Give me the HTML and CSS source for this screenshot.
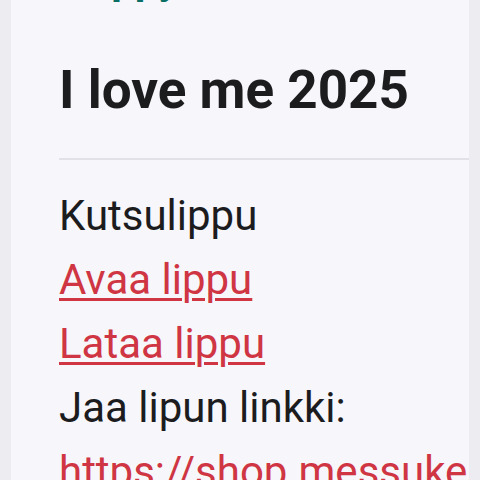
FILE: index.html
```html
<!DOCTYPE html>
<html lang="fi">
<head>
  <meta charset="UTF-8" />
  <title>Kutsulippu</title>
  <meta name="viewport" content="width=device-width, initial-scale=1" />
  <link rel="stylesheet" href="styles.css">
</head>
<body>
  <div class="card">
    <h2 class="brand">Happy</h2>
    <h1 class="event">I love me 2025</h1>
    <div class="ticket">
      <p>Kutsulippu</p>
      <p><a href="#">Avaa lippu</a></p>
      <p><a href="#">Lataa lippu</a></p>
      <p>Jaa lipun linkki:</p>
      <p><a class="share" href="#">https://shop.messukeskus.com/fi/tickets/share</a></p>
    </div>
  </div>
</body>
</html>
```

FILE: styles.css
```css
body {
  margin: 0;
  padding: 0 11px;
  background: #ececf1;
  font-family: Roboto, "Liberation Sans", sans-serif;
  color: #1c1c1e;
  height: 480px;
  overflow: hidden;
}
.card {
  background: #f6f6fb;
  margin-top: -46px;
  padding-left: 48px;
  overflow: hidden;
  min-height: 600px;
}
.brand {
  margin: 0;
  font-size: 42px;
  font-weight: 700;
  line-height: 50px;
  color: #0b6e65;
}
.event {
  margin: 54px 0 0;
  font-size: 53px;
  font-weight: 700;
  line-height: 64px;
  padding-bottom: 36px;
  border-bottom: 2px solid #e1e1e7;
}
.ticket {
  padding-top: 24px;
}
.ticket p {
  margin: 0;
  font-size: 42px;
  line-height: 64px;
  white-space: nowrap;
}
.ticket a {
  color: #cf3542;
  text-decoration-thickness: 3px;
  text-underline-offset: 4px;
}
.ticket a.share {
  text-decoration: none;
}
```
